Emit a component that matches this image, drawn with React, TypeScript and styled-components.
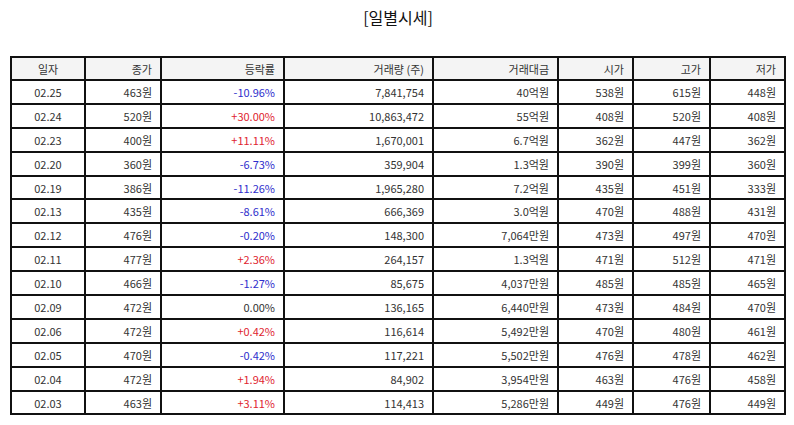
import styled, { createGlobalStyle } from 'styled-components';

type Row = {
  date: string;
  close: string;
  rate: string;
  volume: string;
  amount: string;
  open: string;
  high: string;
  low: string;
};

const rows: Row[] = [
  { date: '02.25', close: '463원', rate: '-10.96%', volume: '7,841,754', amount: '40억원', open: '538원', high: '615원', low: '448원' },
  { date: '02.24', close: '520원', rate: '+30.00%', volume: '10,863,472', amount: '55억원', open: '408원', high: '520원', low: '408원' },
  { date: '02.23', close: '400원', rate: '+11.11%', volume: '1,670,001', amount: '6.7억원', open: '362원', high: '447원', low: '362원' },
  { date: '02.20', close: '360원', rate: '-6.73%', volume: '359,904', amount: '1.3억원', open: '390원', high: '399원', low: '360원' },
  { date: '02.19', close: '386원', rate: '-11.26%', volume: '1,965,280', amount: '7.2억원', open: '435원', high: '451원', low: '333원' },
  { date: '02.13', close: '435원', rate: '-8.61%', volume: '666,369', amount: '3.0억원', open: '470원', high: '488원', low: '431원' },
  { date: '02.12', close: '476원', rate: '-0.20%', volume: '148,300', amount: '7,064만원', open: '473원', high: '497원', low: '470원' },
  { date: '02.11', close: '477원', rate: '+2.36%', volume: '264,157', amount: '1.3억원', open: '471원', high: '512원', low: '471원' },
  { date: '02.10', close: '466원', rate: '-1.27%', volume: '85,675', amount: '4,037만원', open: '485원', high: '485원', low: '465원' },
  { date: '02.09', close: '472원', rate: '0.00%', volume: '136,165', amount: '6,440만원', open: '473원', high: '484원', low: '470원' },
  { date: '02.06', close: '472원', rate: '+0.42%', volume: '116,614', amount: '5,492만원', open: '470원', high: '480원', low: '461원' },
  { date: '02.05', close: '470원', rate: '-0.42%', volume: '117,221', amount: '5,502만원', open: '476원', high: '478원', low: '462원' },
  { date: '02.04', close: '472원', rate: '+1.94%', volume: '84,902', amount: '3,954만원', open: '463원', high: '476원', low: '458원' },
  { date: '02.03', close: '463원', rate: '+3.11%', volume: '114,413', amount: '5,286만원', open: '449원', high: '476원', low: '449원' },
];

const columns = [
  { label: '일자', width: 74, center: true },
  { label: '종가', width: 76 },
  { label: '등락률', width: 123 },
  { label: '거래량 (주)', width: 149 },
  { label: '거래대금', width: 125 },
  { label: '시가', width: 75 },
  { label: '고가', width: 77 },
  { label: '저가', width: 75 },
];

const trendOf = (rate: string) =>
  rate.startsWith('+') ? 'up' : rate.startsWith('-') ? 'down' : 'flat';

const DailyPrices = () => (
  <Page>
    <GlobalStyle />
    <Title>[일별시세]</Title>
    <Table>
      <colgroup>
        {columns.map((c) => (
          <col key={c.label} style={{ width: c.width }} />
        ))}
      </colgroup>
      <thead>
        <HeadRow>
          {columns.map((c) => (
            <HeadCell key={c.label} $center={c.center}>
              {c.label}
            </HeadCell>
          ))}
        </HeadRow>
      </thead>
      <tbody>
        {rows.map((r) => (
          <BodyRow key={r.date}>
            <Cell $center>{r.date}</Cell>
            <Cell>{r.close}</Cell>
            <Cell $trend={trendOf(r.rate)}>{r.rate}</Cell>
            <Cell>{r.volume}</Cell>
            <Cell>{r.amount}</Cell>
            <Cell>{r.open}</Cell>
            <Cell>{r.high}</Cell>
            <Cell>{r.low}</Cell>
          </BodyRow>
        ))}
      </tbody>
    </Table>
  </Page>
);

export default DailyPrices;

const GlobalStyle = createGlobalStyle`
  html, body {
    margin: 0;
    padding: 0;
    background: #fff;
  }
  body {
    font-family: "Noto Sans CJK KR", "Noto Sans", sans-serif;
    color: #222;
  }
`;

const Page = styled.div`
  width: 794px;
  padding: 5px 8px 0 10px;
  box-sizing: border-box;
`;

const Title = styled.h2`
  margin: 0 0 27px;
  text-align: center;
  font-size: 16px;
  line-height: 24px;
  font-weight: 400;
  color: #111;
`;

const Table = styled.table`
  width: 776px;
  table-layout: fixed;
  border-collapse: collapse;
  border: 2px solid #111;
  font-size: 11px;
`;

const HeadRow = styled.tr`
  height: 23px;
`;

const HeadCell = styled.th<{ $center?: boolean }>`
  padding: 0 8px;
  border: 2px solid #111;
  background: #f4f4f4;
  font-weight: 400;
  color: #333;
  text-align: ${(p) => (p.$center ? 'center' : 'right')};
  line-height: 14px;
`;

const BodyRow = styled.tr`
  height: 23.9px;
`;

const Cell = styled.td<{ $center?: boolean; $trend?: 'up' | 'down' | 'flat' }>`
  padding: 0 8px;
  border: 2px solid #111;
  line-height: 14px;
  text-align: ${(p) => (p.$center ? 'center' : 'right')};
  color: ${(p) =>
    p.$trend === 'up' ? '#e0242f' : p.$trend === 'down' ? '#2e2ecc' : '#333'};
  white-space: nowrap;
`;
